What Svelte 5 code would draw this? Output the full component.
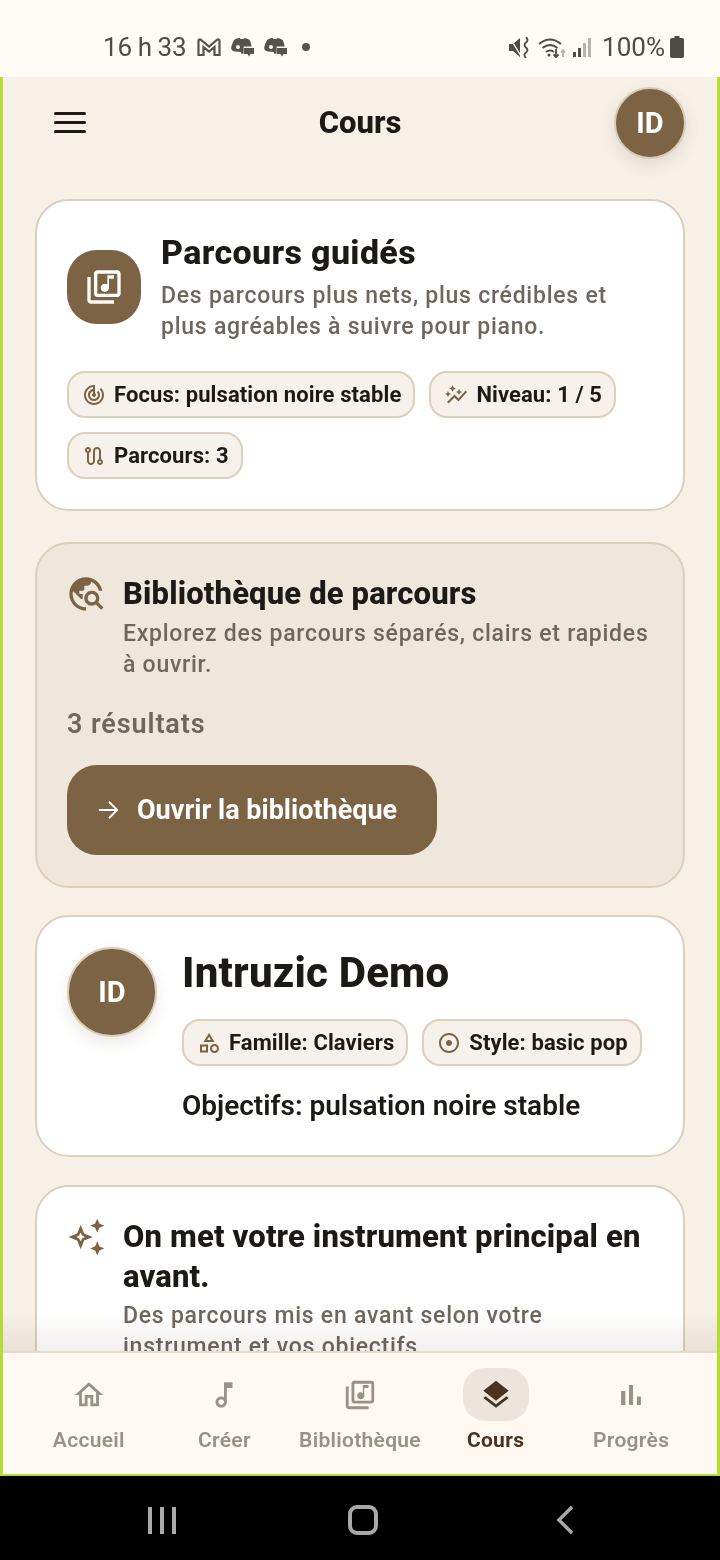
<script>
	const icons = {
		libraryMusic: 'M20 2H8c-1.1 0-2 .9-2 2v12c0 1.1.9 2 2 2h12c1.1 0 2-.9 2-2V4c0-1.1-.9-2-2-2zm0 14H8V4h12v12zm-7.5-1c1.38 0 2.5-1.12 2.5-2.5V7h3V5h-4v5.51c-.42-.32-.93-.51-1.5-.51-1.38 0-2.5 1.12-2.5 2.5s1.12 2.5 2.5 2.5zM4 6H2v14c0 1.1.9 2 2 2h14v-2H4V6z',
		track: 'M19.07 4.93l-1.41 1.41C19.1 7.79 20 9.79 20 12c0 4.42-3.58 8-8 8s-8-3.58-8-8c0-4.08 3.05-7.44 7-7.93v2.02C8.16 6.57 6 9.03 6 12c0 3.31 2.69 6 6 6s6-2.69 6-6c0-1.66-.67-3.16-1.76-4.24l-1.41 1.41C15.55 9.9 16 10.9 16 12c0 2.21-1.79 4-4 4s-4-1.79-4-4c0-1.86 1.28-3.41 3-3.86v2.14c-.6.35-1 .98-1 1.72 0 1.1.9 2 2 2s2-.9 2-2c0-.74-.4-1.38-1-1.72V2h-1C6.48 2 2 6.48 2 12s4.48 10 10 10 10-4.48 10-10c0-2.76-1.12-5.26-2.93-7.07z',
		graph: 'M14.06 9.94L12 9l2.06-.94L15 6l.94 2.06L18 9l-2.06.94L15 12zM4 14l.94-2.06L7 11l-2.06-.94L4 8l-.94 2.06L1 11l2.06.94zm4.5-5l1.09-2.41L12 5.5 9.59 4.41 8.5 2 7.41 4.41 5 5.5l2.41 1.09zm-4 11.5l6-6.01 4 4L23 8.93l-1.41-1.41-7.09 7.97-4-4L3 19z',
		route: 'M19 15.18V7c0-2.21-1.79-4-4-4s-4 1.79-4 4v10c0 1.1-.9 2-2 2s-2-.9-2-2V8.82C8.16 8.4 9 7.3 9 6c0-1.66-1.34-3-3-3S3 4.34 3 6c0 1.3.84 2.4 2 2.82V17c0 2.21 1.79 4 4 4s4-1.79 4-4V7c0-1.1.9-2 2-2s2 .9 2 2v8.18c-1.16.41-2 1.51-2 2.82 0 1.66 1.34 3 3 3s3-1.34 3-3c0-1.3-.84-2.4-2-2.82zM6 5c.55 0 1 .45 1 1s-.45 1-1 1-1-.45-1-1 .45-1 1-1zm12 14c-.55 0-1-.45-1-1s.45-1 1-1 1 .45 1 1-.45 1-1 1z',
		explore: 'M19.3 16.9c.4-.7.7-1.5.7-2.4 0-2.5-2-4.5-4.5-4.5S11 12 11 14.5s2 4.5 4.5 4.5c.9 0 1.7-.3 2.4-.7l3.2 3.2 1.4-1.4-3.2-3.2zm-3.8.1c-1.4 0-2.5-1.1-2.5-2.5s1.1-2.5 2.5-2.5 2.5 1.1 2.5 2.5-1.1 2.5-2.5 2.5zM12 20v2C6.48 22 2 17.52 2 12S6.48 2 12 2c4.84 0 8.87 3.44 9.8 8h-2.07c-.64-2.46-2.4-4.47-4.73-5.41V5c0 1.1-.9 2-2 2h-2v2c0 .55-.45 1-1 1H8v2h2v3H9l-4.79-4.79C4.08 10.79 4 11.38 4 12c0 4.41 3.59 8 8 8z',
		category: 'M12 2l-5.5 9h11L12 2zm0 3.84L13.93 9h-3.87L12 5.84zM17.5 13c-2.49 0-4.5 2.01-4.5 4.5s2.01 4.5 4.5 4.5 4.5-2.01 4.5-4.5-2.01-4.5-4.5-4.5zm0 7c-1.38 0-2.5-1.12-2.5-2.5s1.12-2.5 2.5-2.5 2.5 1.12 2.5 2.5-1.12 2.5-2.5 2.5zM3 21.5h8v-8H3v8zm2-6h4v4H5v-4z',
		adjust: 'M12 2C6.49 2 2 6.49 2 12s4.49 10 10 10 10-4.49 10-10S17.51 2 12 2zm0 18c-4.41 0-8-3.59-8-8s3.59-8 8-8 8 3.59 8 8-3.59 8-8 8zm3-8c0 1.66-1.34 3-3 3s-3-1.34-3-3 1.34-3 3-3 3 1.34 3 3z',
		sparkle: 'M9.5 5l2 5 5 2-5 2-2 5-2-5-5-2 5-2zm0 4.600l-.9 1.500-1.500.9 1.500.9.9 1.500.9-1.500 1.500-.9-1.500-.9zM19 1.500l1.200 2.800L23 5.500l-2.800 1.200L19 9.500l-1.200-2.800L15 5.500l2.800-1.200zM19 14.500l1.200 2.800 2.800 1.200-2.800 1.200-1.200 2.800-1.200-2.800-2.800-1.200 2.800-1.200z',
		home: 'M12 5.69l5 4.5V18h-2v-6H9v6H7v-7.81l5-4.5M12 3L2 12h3v8h6v-6h2v6h6v-8h3L12 3z',
		note: 'M12 3l.01 10.55c-.59-.34-1.27-.55-2-.55C7.79 13 6 14.79 6 17s1.79 4 4.01 4S14 19.21 14 17V7h4V3h-6zm-1.99 16c-1.1 0-2-.9-2-2s.9-2 2-2 2 .9 2 2-.9 2-2 2z',
		layers: 'M11.99 18.54l-7.37-5.73L3 14.07l9 7 9-7-1.63-1.27-7.38 5.74zM12 16l7.36-5.73L21 9l-9-7-9 7 1.63 1.27L12 16z',
		bars: 'M5 9.2h3V19H5zM10.6 5h2.8v14h-2.8zm5.6 8H19v6h-2.8z'
	};

	const topChips = [
		{ icon: icons.track, label: 'Focus: pulsation noire stable' },
		{ icon: icons.graph, label: 'Niveau: 1 / 5' },
		{ icon: icons.route, label: 'Parcours: 3' }
	];

	const profileChips = [
		{ icon: icons.category, label: 'Famille: Claviers' },
		{ icon: icons.adjust, label: 'Style: basic pop' }
	];

	const tabs = [
		{ icon: icons.home, label: 'Accueil' },
		{ icon: icons.note, label: 'Créer' },
		{ icon: icons.libraryMusic, label: 'Bibliothèque' },
		{ icon: icons.layers, label: 'Cours', active: true },
		{ icon: icons.bars, label: 'Progrès' }
	];
</script>

{#snippet glyph(d, cls)}
	<svg class={cls} viewBox="0 0 24 24" fill="currentColor" aria-hidden="true"><path {d} /></svg>
{/snippet}

{#snippet chip(item)}
	<span class="chip">
		{@render glyph(item.icon, 'chip-icon')}
		{item.label}
	</span>
{/snippet}

{#snippet discord()}
	<svg class="st-discord" viewBox="0 0 24 20" fill="#555350" aria-hidden="true">
		<path d="M4 3c3-2 5-2 6-2l.6 1h3l.6-1c2 .2 4 1 5.400 2 1 2 1.700 4 2 6.500h-8v7l-2 .5-1-2c-2 0-4-.8-6-.5C1 13 1 12 1.500 9 2 7 3 5 4 3zm4 5a2 2 0 1 0 0 4 2 2 0 0 0 0-4z" />
		<path d="M14 11h10v6h-3.500L19 19.500 17.500 17H14z" />
	</svg>
{/snippet}

<div class="screen">
	<div class="status">
		<div class="status-left">
			<span class="time">16 h 33</span>
			<svg class="st-gmail" viewBox="0 0 24 18" fill="none" stroke="#555350" stroke-width="2.200" aria-hidden="true">
				<path d="M1.500 17V3q0-2 2-1.500l8.500 7 8.500-7q2-.5 2 1.500v14h-5V9L12 13.500 6.500 9v8z" />
			</svg>
			{@render discord()}
			{@render discord()}
			<span class="st-dot"></span>
		</div>
		<div class="status-right">
			<svg class="st-mute" viewBox="0 0 21 21" fill="#4d4c49" aria-hidden="true">
				<path d="M0 7h4L11 1v19L4 14H0z" />
				<path d="M1 1l11 18" stroke="#fffcf7" stroke-width="1.400" />
				<path d="M17 0q3 3 0 5.500t0 5q3 3 0 5t0 5.500" fill="none" stroke="#4d4c49" stroke-width="1.800" />
			</svg>
			<svg class="st-wifi" viewBox="0 0 29 21" fill="none" stroke="#4d4c49" stroke-width="1.800" aria-hidden="true">
				<path d="M1 7q11-9 22 0M4.500 11q7.500-6 15 0M8 15q4-3 8 0" />
				<circle cx="11" cy="18" r="1.500" fill="#4d4c49" stroke="none" />
				<path d="M18 12v8m-2.500-2.500L18 20l2.500-2.500" />
				<path d="M25 20v-7m-2 2.500l2-2.500 2 2.500" stroke="#b5b3ae" />
			</svg>
			<svg class="st-signal" viewBox="0 0 19 20" aria-hidden="true">
				<rect x="0" y="15" width="3" height="5" fill="#4d4c49" />
				<rect x="5" y="11" width="3" height="9" fill="#4d4c49" />
				<rect x="10" y="6" width="3" height="14" fill="#b5b3ae" />
				<rect x="15" y="1" width="3" height="19" fill="#b5b3ae" />
			</svg>
			<span class="battery-text">100%</span>
			<svg class="st-battery" viewBox="0 0 14 22" fill="#4d4c49" aria-hidden="true">
				<path d="M4.500 0h5v2H12q2 0 2 2v16q0 2-2 2H2q-2 0-2-2V4q0-2 2-2h2.500z" />
			</svg>
		</div>
	</div>

	<div class="frame">
		<main class="content">
			<header class="topbar">
				<button class="menu" aria-label="Menu">
					<span></span><span></span><span></span>
				</button>
				<h1 class="page-title">Cours</h1>
				<div class="avatar avatar-small">ID</div>
			</header>

			<section class="card hero">
				<div class="hero-head">
					<div class="hero-icon">{@render glyph(icons.libraryMusic, 'hero-glyph')}</div>
					<div>
						<h2 class="hero-title">Parcours guidés</h2>
						<p class="muted">Des parcours plus nets, plus crédibles et plus agréables à suivre pour piano.</p>
					</div>
				</div>
				<div class="chips">
					{#each topChips as item}
						{@render chip(item)}
					{/each}
				</div>
			</section>

			<section class="card library">
				<div class="section-head">
					{@render glyph(icons.explore, 'section-icon')}
					<div>
						<h3 class="section-title">Bibliothèque de parcours</h3>
						<p class="muted">Explorez des parcours séparés, clairs et rapides à ouvrir.</p>
					</div>
				</div>
				<p class="results">3 résultats</p>
				<button class="open-btn">
					<svg class="arrow" viewBox="0 0 24 24" fill="none" stroke="currentColor" stroke-width="2" aria-hidden="true">
						<path d="M2 12h20M13 3l9 9-9 9" />
					</svg>
					Ouvrir la bibliothèque
				</button>
			</section>

			<section class="card profile">
				<div class="avatar avatar-large">ID</div>
				<div class="profile-body">
					<h2 class="profile-name">Intruzic Demo</h2>
					<div class="chips">
						{#each profileChips as item}
							{@render chip(item)}
						{/each}
					</div>
					<p class="goals">Objectifs: pulsation noire stable</p>
				</div>
			</section>

			<section class="card featured">
				<div class="section-head">
					{@render glyph(icons.sparkle, 'sparkle-icon')}
					<div>
						<h3 class="section-title">On met votre instrument principal en avant.</h3>
						<p class="muted">Des parcours mis en avant selon votre instrument et vos objectifs.</p>
					</div>
				</div>
			</section>

			<div class="fade"></div>
		</main>

		<nav class="tabbar">
			{#each tabs as tab}
				<div class="tab" class:active={tab.active}>
					<div class="tab-icon">{@render glyph(tab.icon, 'tab-glyph')}</div>
					<span class="tab-label">{tab.label}</span>
				</div>
			{/each}
		</nav>
	</div>

	<div class="sysnav">
		<span class="sys-recents"><i></i><i></i><i></i></span>
		<span class="sys-home"></span>
		<svg class="sys-back" viewBox="0 0 18 30" fill="none" stroke="#a9a9a9" stroke-width="3.400" aria-hidden="true">
			<path d="M16 2L3 15l13 13" />
		</svg>
	</div>
</div>

<style>
	:global(body) {
		margin: 0;
		background: #000;
	}

	.screen {
		width: 720px;
		height: 1560px;
		display: flex;
		flex-direction: column;
		overflow: hidden;
		font-family: Roboto, sans-serif;
		color: #1c1a16;
	}

	.status {
		height: 77px;
		flex: none;
		box-sizing: border-box;
		background: #fffcf7;
		display: flex;
		align-items: center;
		justify-content: space-between;
		padding: 17px 36px 0 103px;
		color: #4d4c49;
		font-size: 26px;
	}

	.status-left,
	.status-right {
		display: flex;
		align-items: center;
	}

	.time {
		word-spacing: -1px;
	}

	.st-gmail {
		width: 24px;
		height: 18px;
		margin-left: 10px;
	}

	.st-discord {
		width: 24px;
		height: 20px;
		margin-left: 9px;
	}

	.st-dot {
		width: 8px;
		height: 8px;
		border-radius: 50%;
		background: #555350;
		margin-left: 15px;
	}

	.st-mute {
		width: 21px;
		height: 21px;
	}

	.st-wifi {
		width: 29px;
		height: 21px;
		margin-left: 8px;
	}

	.st-signal {
		width: 19px;
		height: 20px;
		margin-left: 6px;
	}

	.battery-text {
		margin-left: 10px;
	}

	.st-battery {
		width: 14px;
		height: 22px;
		margin-left: 5px;
	}

	.frame {
		height: 1399px;
		flex: none;
		display: flex;
		flex-direction: column;
		box-sizing: border-box;
		border: solid #b5dc33;
		border-width: 0 3px 2px;
		background: #f6f0e7;
	}

	.content {
		flex: 1;
		min-height: 0;
		overflow: hidden;
		position: relative;
		padding: 0 32px;
		display: flex;
		flex-direction: column;
		gap: 27px;
	}

	.topbar {
		height: 91px;
		flex: none;
		margin-bottom: 4px;
		display: grid;
		grid-template-columns: 1fr auto 1fr;
		align-items: center;
	}

	.menu {
		width: 32px;
		margin-left: 19px;
		padding: 0;
		border: 0;
		background: none;
		display: flex;
		flex-direction: column;
		gap: 6px;
	}

	.menu span {
		height: 3px;
		border-radius: 2px;
		background: #1c1a16;
	}

	.page-title {
		margin: 0;
		font-size: 31px;
		font-weight: 800;
		line-height: 36px;
	}

	.avatar {
		border-radius: 50%;
		background: #7b6344;
		color: #fff;
		font-weight: 700;
		display: flex;
		align-items: center;
		justify-content: center;
		box-sizing: border-box;
		border: 2px solid #d9ccb8;
		box-shadow: 0 6px 16px rgba(90, 70, 40, 0.12);
		flex: none;
	}

	.avatar-small {
		width: 72px;
		height: 72px;
		font-size: 29px;
		justify-self: end;
		margin-right: -1px;
	}

	.avatar-large {
		width: 90px;
		height: 90px;
		font-size: 29px;
	}

	.card {
		flex: none;
		box-sizing: border-box;
		width: 650px;
		background: #fff;
		border: 2px solid #dccfbb;
		border-radius: 34px;
		padding: 29px 30px;
	}

	.hero {
		height: 312px;
		margin-bottom: 4px;
	}

	.hero-head {
		display: flex;
		align-items: center;
		gap: 20px;
	}

	.hero-icon {
		width: 74px;
		height: 74px;
		flex: none;
		margin-top: 2px;
		border-radius: 30px;
		background: #7b6344;
		color: #fff;
		display: flex;
		align-items: center;
		justify-content: center;
	}

	:global(.hero-glyph) {
		width: 40px;
		height: 40px;
	}

	.hero-title {
		margin: 0 0 6px;
		font-size: 34px;
		font-weight: 800;
		line-height: 44px;
		letter-spacing: 0.35px;
	}

	.muted {
		margin: 0;
		font-size: 23px;
		font-weight: 500;
		line-height: 31px;
		letter-spacing: 0.75px;
		color: #6f675e;
	}

	.chips {
		display: flex;
		flex-wrap: wrap;
		gap: 14px;
	}

	.hero .chips {
		margin-top: 29px;
	}

	.chip {
		height: 47px;
		box-sizing: border-box;
		display: inline-flex;
		align-items: center;
		gap: 8px;
		padding: 0 12px 0 13px;
		background: #f6f1ea;
		border: 2px solid #dccfbb;
		border-radius: 18px;
		font-size: 22px;
		font-weight: 700;
		letter-spacing: 0.1px;
		white-space: nowrap;
	}

	:global(.chip-icon) {
		width: 24px;
		height: 24px;
		color: #7b6344;
		flex: none;
	}

	.library {
		height: 346px;
		padding-top: 30px;
		background: #efe7dc;
	}

	.section-head {
		display: flex;
		gap: 17px;
		align-items: flex-start;
	}

	:global(.section-icon) {
		width: 40px;
		height: 40px;
		margin-left: -1px;
		color: #7b6344;
		flex: none;
	}

	:global(.sparkle-icon) {
		width: 42px;
		height: 42px;
		margin: -1px 0 0 -3px;
		color: #7b6344;
		flex: none;
	}

	.section-title {
		margin: 0 0 4px;
		font-size: 31px;
		font-weight: 800;
		line-height: 40px;
		letter-spacing: 0.15px;
	}

	.results {
		margin: 28px 0 24px;
		font-size: 27px;
		font-weight: 600;
		line-height: 33px;
		letter-spacing: 0.9px;
		color: #6f675e;
	}

	.open-btn {
		height: 90px;
		width: 370px;
		box-sizing: border-box;
		border: 0;
		border-radius: 30px;
		background: #7b6344;
		color: #fff;
		font-family: inherit;
		font-size: 27px;
		font-weight: 700;
		display: flex;
		align-items: center;
		gap: 18px;
		padding: 0 0 0 30px;
	}

	.arrow {
		width: 22px;
		height: 22px;
	}

	.profile {
		height: 242px;
		padding-top: 30px;
		margin-bottom: 1px;
		display: flex;
		gap: 25px;
	}

	.profile-name {
		margin: 1px 0 21px;
		font-size: 42px;
		font-weight: 800;
		line-height: 50px;
		letter-spacing: 0.2px;
	}

	.goals {
		margin: 22px 0 0;
		font-size: 28px;
		font-weight: 600;
		line-height: 36px;
	}

	.featured {
		height: 300px;
		padding-top: 30px;
	}

	.featured .section-title {
		margin-bottom: 3px;
	}

	.fade {
		position: absolute;
		left: 0;
		right: 0;
		bottom: 0;
		height: 40px;
		background: linear-gradient(#fff, #f2f0ed);
		mix-blend-mode: multiply;
		pointer-events: none;
	}

	.tabbar {
		height: 123px;
		flex: none;
		box-sizing: border-box;
		background: #fff9f1;
		border-top: 2px solid #e5dccf;
		display: flex;
		padding: 15px 18px 0;
	}

	.tab {
		flex: 1 1 0;
		min-width: 0;
		display: flex;
		flex-direction: column;
		align-items: center;
		color: #9a9186;
	}

	.tab-icon {
		width: 66px;
		height: 53px;
		flex: none;
		border-radius: 22px;
		display: flex;
		align-items: center;
		justify-content: center;
	}

	:global(.tab-glyph) {
		width: 34px;
		height: 34px;
	}

	.tab-label {
		margin-top: 5px;
		font-size: 21px;
		font-weight: 600;
		line-height: 28px;
		letter-spacing: 0.3px;
		white-space: nowrap;
	}

	.tab.active {
		color: #4b3321;
	}

	.tab.active .tab-icon {
		background: #ebe5db;
	}

	.tab.active .tab-label {
		font-weight: 700;
	}

	.sysnav {
		flex: 1;
		background: #000;
		display: flex;
		align-items: center;
		justify-content: space-between;
		padding: 4px 146px 0 148px;
	}

	.sys-recents {
		display: flex;
		gap: 8px;
	}

	.sys-recents i {
		width: 4px;
		height: 27px;
		background: #a9a9a9;
	}

	.sys-home {
		width: 22px;
		height: 22px;
		margin-right: 6px;
		border: 4px solid #a9a9a9;
		border-radius: 9px;
	}

	.sys-back {
		width: 18px;
		height: 30px;
	}
</style>
